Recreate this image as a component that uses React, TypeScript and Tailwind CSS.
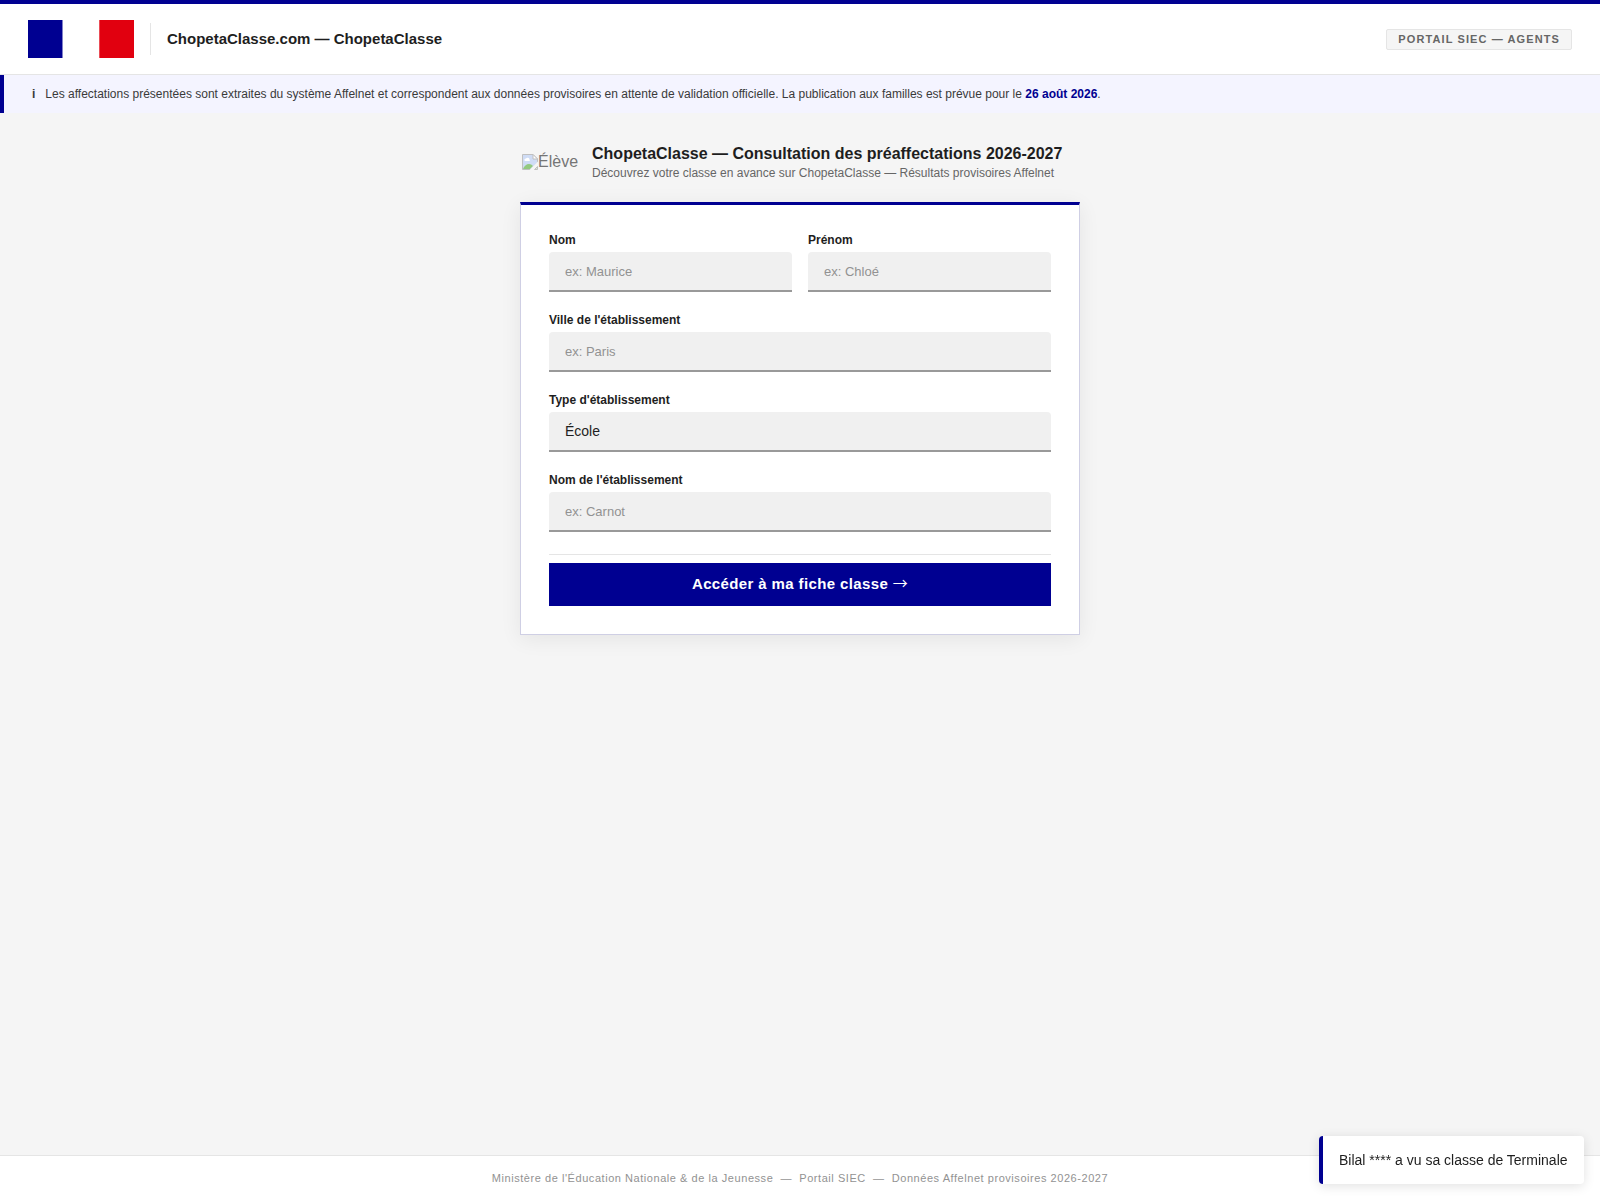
import type { ComponentProps, ReactNode } from "react"

const controlClass =
  "block h-10 w-full appearance-none rounded-t border-b-2 border-[#999999] bg-[#f0f0f0] px-4 outline-none focus:border-[#000091]"

function Field({ id, label, children }: { id: string; label: string; children: ReactNode }) {
  return (
    <div>
      <label htmlFor={id} className="mb-[5px] block text-xs/[14px] font-bold text-[#1e1e1e]">
        {label}
      </label>
      {children}
    </div>
  )
}

function TextField({ id, label, ...props }: { id: string; label: string } & ComponentProps<"input">) {
  return (
    <Field id={id} label={label}>
      <input
        id={id}
        type="text"
        className={`${controlClass} text-[13px] text-[#1e1e1e] placeholder:text-[#929292]`}
        {...props}
      />
    </Field>
  )
}

function Flag() {
  return (
    <svg width="106" height="38" viewBox="0 0 106 38" aria-hidden>
      <rect width="34.7" height="38" fill="#000091" />
      <rect x="34.7" width="36.6" height="38" fill="#fff" />
      <rect x="71.3" width="34.7" height="38" fill="#e1000f" />
    </svg>
  )
}

function MissingImage() {
  return (
    <svg width="16" height="16" viewBox="0 0 16 16" aria-hidden>
      <path d="M0.5 0.5H11L15.5 5V9L9 15.5H0.5Z" fill="#cfdcf5" stroke="#c0c0c0" />
      <path d="M2.5 6.5a1.5 1.5 0 0 1 1.5-2 2 2 0 0 1 3.5 1 1 1 0 0 1 0 1.5H3z" fill="#fff" />
      <path d="M1 15c1-3 3.500-5 6-5 1.500 0 3 .8 4 2l-3 3z" fill="#93c97f" />
      <path d="M11 0.500V5h4.500z" fill="#fff" stroke="#c0c0c0" />
      <path d="M16 7.500 7.500 16h3L16 10.500z" fill="#f5f5f5" />
      <path d="M15.500 12.500v3H12.500z" fill="#d8e8d2" stroke="#c0c0c0" />
    </svg>
  )
}

export default function App() {
  return (
    <div className="flex min-h-screen flex-col bg-[#f5f5f5] font-['Liberation_Sans',Arial,sans-serif] text-[#1e1e1e]">
      <header className="flex items-center justify-between border-t-4 border-b border-t-[#000091] border-b-[#e5e5e5] bg-white px-7 py-4">
        <div className="flex items-center gap-4">
          <Flag />
          <div className="h-8 w-px bg-[#e5e5e5]" />
          <span className="text-[15px] font-bold">ChopetaClasse.com — ChopetaClasse</span>
        </div>
        <span className="rounded-xs border border-[#e5e5e5] bg-[#f5f5f5] px-[11px] py-[3px] text-[11px]/[13px] font-bold tracking-widest text-[#666666] uppercase">
          Portail SIEC — Agents
        </span>
      </header>

      <div className="flex gap-2.5 border-l-4 border-[#000091] bg-[#f4f4ff] px-7 py-2.5 text-xs/[18px] text-[#3a3a3a]">
        <span className="font-bold">i</span>
        <p>
          Les affectations présentées sont extraites du système Affelnet et correspondent aux données provisoires en
          attente de validation officielle. La publication aux familles est prévue pour le{" "}
          <strong className="text-[#000091]">26 août 2026</strong>.
        </p>
      </div>

      <main className="mx-auto w-full max-w-[560px] grow pt-8">
        <div className="mb-5 flex items-center gap-3.5 pl-0.5">
          <div className="flex items-start pb-1 text-base text-[#757575]">
            <MissingImage />
            <span className="leading-4">Élève</span>
          </div>
          <div>
            <h1 className="text-base/[18px] font-bold">ChopetaClasse — Consultation des préaffectations 2026-2027</h1>
            <p className="mt-px text-xs/[18px] text-[#666666]">
              Découvrez votre classe en avance sur ChopetaClasse — Résultats provisoires Affelnet
            </p>
          </div>
        </div>

        <form
          onSubmit={(e) => e.preventDefault()}
          className="border border-t-3 border-[#cfcfe4] border-t-[#000091] bg-white p-7 shadow-[0_4px_20px_rgba(0,0,0,0.07)]"
        >
          <div className="flex flex-col gap-[21px]">
            <div className="grid grid-cols-2 gap-4">
              <TextField id="nom" label="Nom" placeholder="ex: Maurice" />
              <TextField id="prenom" label="Prénom" placeholder="ex: Chloé" />
            </div>
            <TextField id="ville" label="Ville de l'établissement" placeholder="ex: Paris" />
            <Field id="type" label="Type d'établissement">
              <select id="type" className={`${controlClass} text-sm text-[#1e1e1e]`}>
                <option>École</option>
                <option>Collège</option>
                <option>Lycée</option>
              </select>
            </Field>
            <TextField id="etablissement" label="Nom de l'établissement" placeholder="ex: Carnot" />
          </div>

          <hr className="mt-[22px] mb-2 border-[#e5e5e5]" />
          <button type="submit" className="block w-full bg-[#000091] pt-[11px] pb-[13px] text-[15px]/[19px] font-bold tracking-wide text-white">
            Accéder à ma fiche classe{" "}
            <span className="font-['Noto_Sans_CJK_JP',sans-serif] leading-none font-normal">→</span>
          </button>
        </form>
      </main>

      <footer className="border-t border-[#e5e5e5] bg-white py-3.5 text-center text-[11px]/[16px] tracking-wider text-[#929292]">
        Ministère de l'Éducation Nationale &amp; de la Jeunesse &nbsp;—&nbsp; Portail SIEC &nbsp;—&nbsp; Données Affelnet
        provisoires 2026-2027
      </footer>

      <div
        role="status"
        className="fixed right-4 bottom-4 rounded border-l-4 border-[#000091] bg-white px-4 py-3.5 text-sm/[20px] shadow-[0_2px_12px_rgba(0,0,0,0.12)] will-change-transform"
      >
        Bilal **** a vu sa classe de Terminale
      </div>
    </div>
  )
}
